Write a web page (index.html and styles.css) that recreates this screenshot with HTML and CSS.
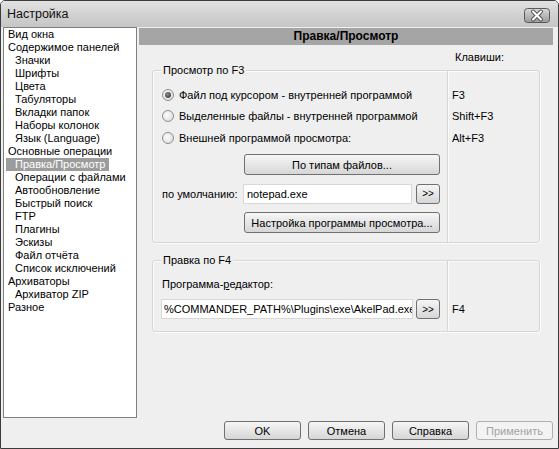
FILE: index.html
```html
<!DOCTYPE html>
<html lang="ru">
<head>
<meta charset="utf-8">
<title>Настройка</title>
<link rel="stylesheet" href="styles.css">
</head>
<body>
<div class="window">
  <div class="titlebar">
    <span class="title">Настройка</span>
    <span class="close">
      <svg width="26" height="15" viewBox="0 0 26 15">
        <defs>
          <linearGradient id="cg" x1="0" y1="0" x2="0" y2="1">
            <stop offset="0" stop-color="#d9d9d9"/>
            <stop offset="1" stop-color="#9a9a9a"/>
          </linearGradient>
        </defs>
        <rect x="0.5" y="0.5" width="25" height="14" rx="3" fill="url(#cg)" stroke="#5a5a5a"/>
        <path d="M9 3.5 L17 11.5 M17 3.5 L9 11.5" stroke="#555" stroke-width="4" stroke-linecap="round"/>
        <path d="M9 3.5 L17 11.5 M17 3.5 L9 11.5" stroke="#fff" stroke-width="2" stroke-linecap="round"/>
      </svg>
    </span>
  </div>
  <div class="main">
    <ul class="tree">
      <li>Вид окна</li>
      <li>Содержимое панелей</li>
      <li class="sub">Значки</li>
      <li class="sub">Шрифты</li>
      <li class="sub">Цвета</li>
      <li class="sub">Табуляторы</li>
      <li class="sub">Вкладки папок</li>
      <li class="sub">Наборы колонок</li>
      <li class="sub">Язык (Language)</li>
      <li>Основные операции</li>
      <li class="sub"><span class="selected">Правка/Просмотр</span></li>
      <li class="sub">Операции с файлами</li>
      <li class="sub">Автообновление</li>
      <li class="sub">Быстрый поиск</li>
      <li class="sub">FTP</li>
      <li class="sub">Плагины</li>
      <li class="sub">Эскизы</li>
      <li class="sub">Файл отчёта</li>
      <li class="sub">Список исключений</li>
      <li>Архиваторы</li>
      <li class="sub">Архиватор ZIP</li>
      <li>Разное</li>
    </ul>
    <div class="panel">
      <div class="panel-header">Правка/Просмотр</div>
      <div class="keys-caption">Клавиши:</div>
      <div class="group g1">
        <div class="legend">Просмотр по F3</div>
        <div class="group-main">
          <div class="row r1"><span class="radio checked"></span>Файл под курсором - внутренней программой</div>
          <div class="row r2"><span class="radio"></span>Выделенные файлы - внутренней программой</div>
          <div class="row r3"><span class="radio"></span>Внешней программой просмотра:</div>
          <div class="btn wide b1">По типам файлов...</div>
          <div class="field-row">
            <span class="field-label">по умолчанию:</span>
            <div class="input short">notepad.exe</div>
            <div class="btn small">&gt;&gt;</div>
          </div>
          <div class="btn wide b2">Настройка программы просмотра...</div>
        </div>
        <div class="group-keys">
          <div class="row r1">F3</div>
          <div class="row r2">Shift+F3</div>
          <div class="row r3">Alt+F3</div>
        </div>
      </div>
      <div class="group g2">
        <div class="legend">Правка по F4</div>
        <div class="group-main">
          <div class="label-row">Программа-<u>р</u>едактор:</div>
          <div class="field-row2">
            <div class="input long">%COMMANDER_PATH%\Plugins\exe\AkelPad.exe</div>
            <div class="btn small">&gt;&gt;</div>
          </div>
        </div>
        <div class="group-keys">
          <div class="key-f4">F4</div>
        </div>
      </div>
    </div>
  </div>
  <div class="buttons">
    <div class="btn dlg">OK</div>
    <div class="btn dlg">Отмена</div>
    <div class="btn dlg">Справка</div>
    <div class="btn dlg disabled">Применить</div>
  </div>
</div>
</body>
</html>
```
FILE: styles.css
```css
* { box-sizing: border-box; }
html, body { margin: 0; padding: 0; background: #ffffff; }
body {
  font-family: "Liberation Sans", Arial, sans-serif;
  font-size: 11px;
  color: #000;
}
.window {
  width: 559px;
  height: 449px;
  border: 1px solid #3c3c3c;
  border-radius: 5px 5px 0 0;
  background: #efefef;
  display: flex;
  flex-direction: column;
  overflow: hidden;
}
.titlebar {
  height: 26px;
  flex: none;
  display: flex;
  align-items: center;
  justify-content: space-between;
  padding: 0 8px 0 6px;
  background: linear-gradient(#e2e2e2, #cfcfcf 60%, #c6c6c6);
}
.title { font-size: 12.5px; color: #111; }
.close { display: flex; margin-top: 2px; }

.main {
  height: 391px;
  flex: none;
  display: flex;
  padding: 0 5px 0 2px;
}
.tree {
  width: 134px;
  height: 391px;
  margin: 0;
  padding: 0 0 0 4px;
  list-style: none;
  background: #fff;
  border: 1px solid #808080;
}
.tree li {
  height: 13px;
  line-height: 13px;
  white-space: nowrap;
}
.tree li.sub { padding-left: 7px; }
.selected {
  display: inline-block;
  margin-left: -9px;
  padding: 0 4px 0 9px;
  background: #9c9c9c;
  color: #fff;
  height: 13px;
}
.panel {
  margin-left: 2px;
  margin-top: 1px;
  width: 414px;
  display: flex;
  flex-direction: column;
}
.panel-header {
  height: 17px;
  line-height: 17px;
  background: #a5a5a5;
  text-align: center;
  font-weight: bold;
  font-size: 12px;
}
.keys-caption {
  height: 25px;
  line-height: 24px;
  padding-left: 316px;
}
.group {
  position: relative;
  margin: 0 13px;
  display: flex;
  border: 1px solid #d6d6d6;
  border-radius: 3px;
  box-shadow: inset 1px 1px 0 #fbfbfb, 1px 1px 0 #fbfbfb;
}
.g2 { margin-top: 17px; }
.legend {
  position: absolute;
  top: -8px;
  left: 8px;
  padding: 0 2px;
  line-height: 14px;
  background: #efefef;
}
.group-main {
  width: 295px;
  padding: 13px 7px 9px 9px;
  border-right: 1px solid #d6d6d6;
  box-shadow: 1px 0 0 #fbfbfb;
}
.group-keys {
  flex: 1;
  padding: 13px 0 0 4px;
}
.row {
  display: flex;
  align-items: center;
  white-space: nowrap;
}
.r1 { height: 21px; }
.r2 { height: 22px; }
.r3 { height: 21px; }
.radio {
  width: 12px;
  height: 12px;
  border-radius: 50%;
  border: 1px solid #8e8e8e;
  background: radial-gradient(circle at 40% 40%, #fdfdfd, #d6d6d6);
  margin-right: 5px;
  flex: none;
  position: relative;
}
.radio.checked::after {
  content: "";
  position: absolute;
  left: 2px;
  top: 2px;
  width: 6px;
  height: 6px;
  border-radius: 50%;
  background: radial-gradient(circle at 40% 40%, #8a8a8a, #2a2a2a);
}
.btn {
  display: flex;
  align-items: center;
  justify-content: center;
  border: 1px solid #707070;
  border-radius: 3px;
  background: linear-gradient(#f6f6f6, #e6e6e6 50%, #d6d6d6);
  white-space: nowrap;
}
.wide {
  width: 196px;
  height: 21px;
  margin-left: 82px;
}
.b1 { margin-top: 6px; }
.b2 { margin-top: 8px; }
.field-row {
  margin-top: 8px;
  height: 21px;
  display: flex;
  align-items: center;
}
.field-label { width: 81px; white-space: nowrap; }
.input {
  height: 20px;
  line-height: 18px;
  background: #fff;
  border: 1px solid #d8d8d8;
  padding: 0 3px;
  white-space: nowrap;
  overflow: hidden;
}
.short { width: 169px; }
.small {
  width: 24px;
  height: 20px;
  margin-left: 4px;
  font-size: 10px;
}
.label-row {
  margin-top: 2px;
  height: 16px;
  line-height: 16px;
}
.label-row u { text-decoration: underline; }
.field-row2 {
  margin-top: 7px;
  display: flex;
  margin-left: -1px;
  margin-bottom: 3px;
}
.long { width: 252px; padding-left: 2px; }
.field-row2 .small { margin-left: 3px; }
.key-f4 {
  margin-top: 25px;
  height: 20px;
  line-height: 20px;
}
.buttons {
  flex: 1;
  display: flex;
  justify-content: flex-end;
  gap: 7px;
  padding: 3px 5px 0 0;
}
.dlg {
  width: 77px;
  height: 19px;
}
.disabled {
  color: #a3a3a3;
  border-color: #b0b0b0;
  background: #f3f3f3;
}
```
